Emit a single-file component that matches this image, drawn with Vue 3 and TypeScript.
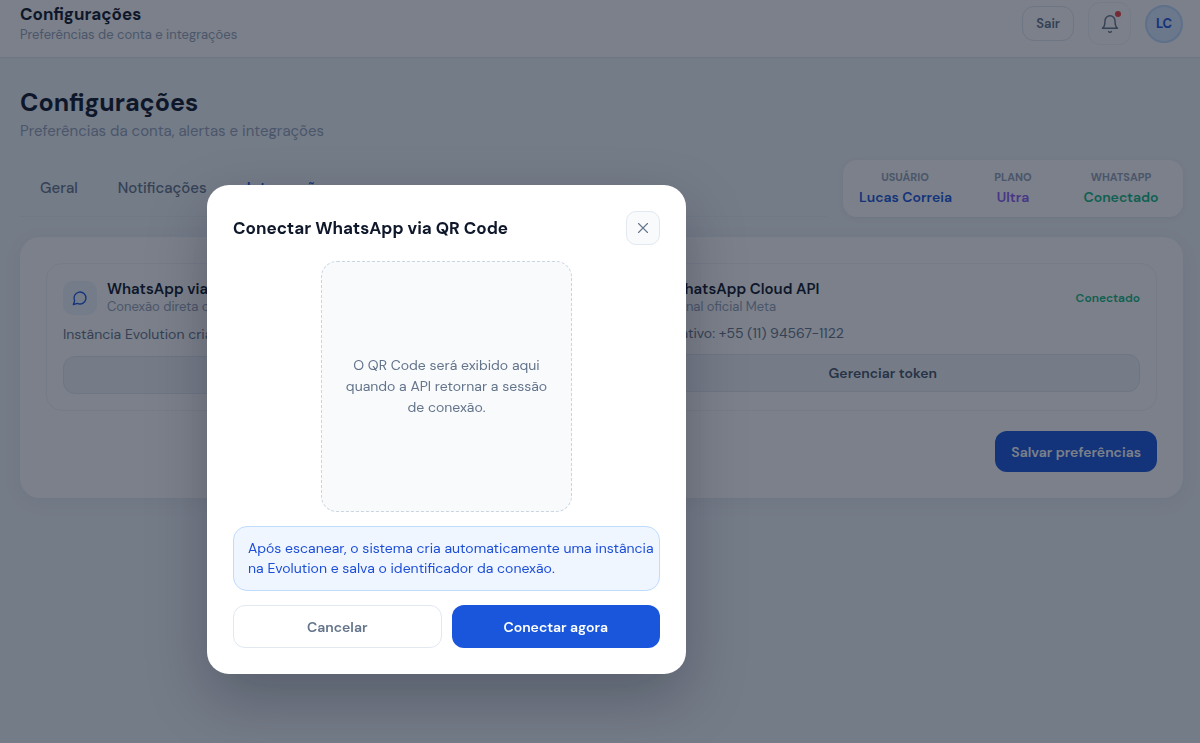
<script setup lang="ts">
import { ref } from 'vue'

interface Stat {
  label: string
  value: string
  tone: string
}

const tabs: string[] = ['Geral', 'Notificações', 'Integrações']
const activeTab = ref<string>('Integrações')
const modalOpen = ref<boolean>(true)

const stats: Stat[] = [
  { label: 'USUÁRIO', value: 'Lucas Correia', tone: 'blue' },
  { label: 'PLANO', value: 'Ultra', tone: 'violet' },
  { label: 'WHATSAPP', value: 'Conectado', tone: 'green' },
]
</script>

<template>
  <div class="app">
    <header class="topbar">
      <div class="topbar-text">
        <p class="topbar-title">Configurações</p>
        <p class="topbar-sub">Preferências de conta e integrações</p>
      </div>
      <div class="topbar-actions">
        <button class="logout" type="button">Sair</button>
        <button class="bell" type="button" aria-label="Notificações">
          <svg width="20" height="20" viewBox="0 0 24 24" fill="none" stroke="currentColor" stroke-width="1.7" stroke-linecap="round" stroke-linejoin="round">
            <path d="M6 8a6 6 0 0 1 12 0c0 7 3 9 3 9H3s3-2 3-9" />
            <path d="M10.3 21a1.940 1.940 0 0 0 3.400 0" />
          </svg>
          <span class="dot"></span>
        </button>
        <div class="avatar">LC</div>
      </div>
    </header>

    <main class="page">
      <h1>Configurações</h1>
      <p class="lead">Preferências da conta, alertas e integrações</p>

      <div class="tabs-row">
        <nav class="tabs">
          <button
            v-for="tab in tabs"
            :key="tab"
            type="button"
            :class="['tab', { active: tab === activeTab }]"
            @click="activeTab = tab"
          >{{ tab }}</button>
        </nav>
        <dl class="stats">
          <div v-for="stat in stats" :key="stat.label" class="stat">
            <dt>{{ stat.label }}</dt>
            <dd :class="stat.tone">{{ stat.value }}</dd>
          </div>
        </dl>
      </div>

      <section class="panel">
        <div class="cards">
          <article class="card">
            <div class="card-head">
              <span class="card-icon">
                <svg width="16" height="16" viewBox="0 0 24 24" fill="none" stroke="currentColor" stroke-width="2" stroke-linecap="round" stroke-linejoin="round">
                  <path d="M7.900 20A9 9 0 1 0 4 16.100L2 22Z" />
                </svg>
              </span>
              <div class="card-names">
                <h2>WhatsApp via QR Code</h2>
                <p>Conexão direta com Evolution</p>
              </div>
            </div>
            <p class="card-desc tall">Instância Evolution criada</p>
            <button class="soft" type="button" @click="modalOpen = true">Conectar</button>
          </article>

          <article class="card">
            <div class="card-head">
              <span class="card-icon">
                <svg width="16" height="16" viewBox="0 0 24 24" fill="none" stroke="currentColor" stroke-width="2" stroke-linecap="round" stroke-linejoin="round">
                  <path d="M5 4h4l2 5-2.500 1.500a11 11 0 0 0 5 5L15 13l5 2v4a2 2 0 0 1-2 2A16 16 0 0 1 3 6a2 2 0 0 1 2-2" />
                </svg>
              </span>
              <div class="card-names">
                <h2>WhatsApp Cloud API</h2>
                <p>Canal oficial Meta</p>
              </div>
              <span class="status">Conectado</span>
            </div>
            <p class="card-desc">Número ativo: +55 (11) 94567-1122</p>
            <button class="soft" type="button">Gerenciar token</button>
          </article>
        </div>
        <div class="panel-foot">
          <button class="save" type="button">Salvar preferências</button>
        </div>
      </section>
    </main>

    <div v-if="modalOpen" class="overlay">
      <div class="modal" role="dialog" aria-modal="true" aria-labelledby="modal-title">
        <div class="modal-head">
          <h2 id="modal-title">Conectar WhatsApp via QR Code</h2>
          <button class="close" type="button" aria-label="Fechar" @click="modalOpen = false">
            <svg width="18" height="18" viewBox="0 0 24 24" fill="none" stroke="currentColor" stroke-width="1.500" stroke-linecap="round">
              <path d="M18 6 6 18M6 6l12 12" />
            </svg>
          </button>
        </div>
        <div class="qr">
          <p>O QR Code será exibido aqui<br />quando a API retornar a sessão<br />de conexão.</p>
        </div>
        <p class="notice">Após escanear, o sistema cria automaticamente uma instância na Evolution e salva o identificador da conexão.</p>
        <div class="modal-actions">
          <button class="cancel" type="button" @click="modalOpen = false">Cancelar</button>
          <button class="confirm" type="button">Conectar agora</button>
        </div>
      </div>
    </div>
  </div>
</template>

<style>
body {
  margin: 0;
  background: #f0f5fa;
}
</style>

<style scoped>
.app {
  min-height: 100vh;
  background: #f0f5fa;
  color: #0f172a;
  font-family: "DM Sans", Inter, "Liberation Sans", sans-serif;
  font-size: 14px;
}

.app *,
.app *::before {
  box-sizing: border-box;
}

p,
h1,
h2,
dl,
dd {
  margin: 0;
}

button {
  font-family: inherit;
  padding: 0;
  cursor: pointer;
}

.topbar {
  display: flex;
  align-items: center;
  justify-content: space-between;
  padding: 2px 17px 12px 20px;
  background: #fff;
  border-bottom: 1px solid #e2e8f0;
}

.topbar-text {
  padding-top: 2px;
}

.topbar-title {
  font-size: 17px;
  line-height: 21px;
  font-weight: 700;
}

.topbar-sub {
  font-size: 13px;
  line-height: 20px;
  color: #94a3b8;
}

.topbar-actions {
  display: flex;
  align-items: center;
  gap: 14px;
}

.logout {
  height: 35px;
  padding: 0 13px;
  border: 1px solid #e2e8f0;
  border-radius: 12px;
  background: #fff;
  color: #64748b;
  font-size: 13px;
  font-weight: 600;
}

.bell {
  position: relative;
  display: grid;
  place-items: center;
  width: 43px;
  height: 43px;
  border: 1px solid #f1f5f9;
  border-radius: 12px;
  background: #fff;
  color: #64748b;
}

.dot {
  position: absolute;
  top: 8px;
  right: 9px;
  width: 6px;
  height: 6px;
  border-radius: 50%;
  background: #ef4444;
}

.avatar {
  display: grid;
  place-items: center;
  width: 38px;
  height: 38px;
  border: 2px solid #bfdbfe;
  border-radius: 50%;
  background: #dbeafe;
  color: #1a56db;
  font-size: 13px;
  font-weight: 700;
}

.page {
  padding: 29px 17px 28px 20px;
}

h1 {
  font-size: 25px;
  line-height: 32px;
  font-weight: 700;
}

.lead {
  margin-top: 2px;
  font-size: 15px;
  line-height: 20px;
  color: #94a3b8;
}

.tabs-row {
  display: flex;
  align-items: stretch;
  gap: 16px;
  margin-top: 19px;
}

.tabs {
  display: flex;
  flex: 1;
  align-items: center;
  border-bottom: 1px solid #e8eef5;
}

.tab {
  padding: 8px 20px;
  border: 0;
  background: none;
  color: #64748b;
  font-size: 15px;
  line-height: 20px;
  font-weight: 500;
}

.tab.active {
  color: #1a56db;
  font-weight: 600;
}

.stats {
  display: grid;
  grid-template-columns: repeat(3, 92px);
  gap: 16px;
  padding: 8px 16px 9px;
  border-radius: 14px;
  background: #fff;
  text-align: center;
  box-shadow: 0 1px 6px rgba(15, 23, 42, 0.05);
}

dt {
  font-size: 11px;
  line-height: 19px;
  font-weight: 700;
  color: #94a3b8;
}

dd {
  font-size: 14px;
  line-height: 21px;
  font-weight: 600;
  white-space: nowrap;
}

.blue {
  color: #1a56db;
}

.violet {
  color: #8b5cf6;
}

.green {
  color: #10b981;
}

.panel {
  margin-top: 20px;
  padding: 26px;
  border-radius: 20px;
  background: #fff;
  box-shadow: 0 4px 20px rgba(15, 23, 42, 0.05);
}

.cards {
  display: grid;
  grid-template-columns: 1fr 1fr;
  gap: 14px;
}

.card {
  display: flex;
  flex-direction: column;
  padding: 16px;
  border: 1px solid #f1f5f9;
  border-radius: 16px;
}

.card-head {
  display: flex;
  align-items: center;
  gap: 10px;
}

.card-icon {
  display: grid;
  place-items: center;
  width: 34px;
  height: 34px;
  border-radius: 10px;
  background: #eff6ff;
  color: #1a56db;
}

.card-names {
  flex: 1;
}

.card-names h2 {
  font-size: 15px;
  line-height: 18px;
  font-weight: 600;
}

.card-names p {
  font-size: 13px;
  line-height: 18px;
  color: #94a3b8;
}

.status {
  color: #10b981;
  font-size: 12px;
  font-weight: 600;
}

.card-desc {
  margin: 6px 0 10px;
  font-size: 14px;
  line-height: 22px;
  color: #64748b;
}

.card-desc.tall {
  line-height: 24px;
}

.soft {
  height: 38px;
  border: 1px solid #e2e8f0;
  border-radius: 12px;
  background: #f1f5f9;
  color: #475569;
  font-size: 14px;
  font-weight: 600;
}

.panel-foot {
  display: flex;
  justify-content: flex-end;
  margin-top: 20px;
}

.save {
  height: 41px;
  padding: 0 16px;
  border: 0;
  border-radius: 12px;
  background: #1a56db;
  color: #fff;
  font-size: 14px;
  font-weight: 600;
}

.overlay {
  position: fixed;
  inset: 0;
  padding: 185px 207px 20px;
  background: rgba(15, 23, 42, 0.55);
}

.modal {
  display: flex;
  flex-direction: column;
  max-width: 479px;
  padding: 26px;
  border-radius: 22px;
  background: #fff;
  box-shadow: 0 24px 60px rgba(2, 6, 23, 0.25);
}

.modal-head {
  display: flex;
  align-items: center;
  justify-content: space-between;
}

.modal-head h2 {
  font-size: 17px;
  line-height: 24px;
  font-weight: 700;
}

.close {
  display: grid;
  place-items: center;
  width: 34px;
  height: 34px;
  border: 1px solid #e2e8f0;
  border-radius: 10px;
  background: #f8fafc;
  color: #64748b;
}

.qr {
  display: grid;
  place-items: center;
  align-self: center;
  width: 251px;
  height: 251px;
  margin-top: 16px;
  border: 1px dashed #cbd5e1;
  border-radius: 16px;
  background: #f8fafc;
  color: #64748b;
  font-size: 14px;
  line-height: 21px;
  text-align: center;
  white-space: nowrap;
}

.notice {
  margin-top: 14px;
  padding: 11px 2px 12px 14px;
  border: 1px solid #bfdbfe;
  border-radius: 14px;
  background: #eff6ff;
  color: #1d4ed8;
  font-size: 14px;
  line-height: 20px;
}

.modal-actions {
  display: grid;
  grid-template-columns: 1fr 1fr;
  gap: 10px;
  margin-top: 14px;
}

.cancel,
.confirm {
  height: 43px;
  border-radius: 12px;
  font-size: 14px;
  font-weight: 600;
}

.cancel {
  border: 1px solid #e2e8f0;
  background: #fff;
  color: #64748b;
}

.confirm {
  border: 0;
  background: #1a56db;
  color: #fff;
}
</style>
